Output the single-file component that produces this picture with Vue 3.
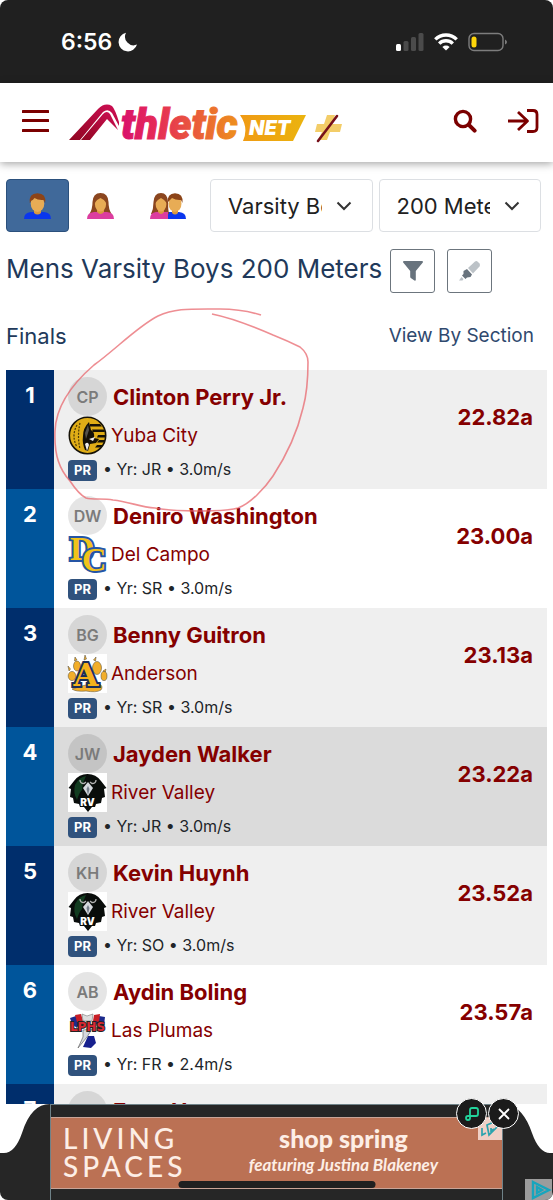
<template>
  <div class="page">
    <div class="status-bar">
      <div class="status-time">
        <span>6:56</span>
        <svg width="20" height="20" viewBox="0 0 20 20" aria-hidden="true">
          <path d="M8 .8A9.4 9.4 0 1 0 19 12.6 8.6 8.6 0 0 1 8 .8Z" fill="#fff" />
        </svg>
      </div>
      <div class="status-icons">
        <svg width="28" height="18" viewBox="0 0 28 18" aria-hidden="true">
          <rect x="0" y="11" width="5" height="7" rx="1.5" fill="#fff" />
          <rect x="7.5" y="8" width="5" height="10" rx="1.5" fill="#4b4b4b" />
          <rect x="15" y="4" width="5" height="14" rx="1.5" fill="#4b4b4b" />
          <rect x="22.5" y="0" width="5" height="18" rx="1.5" fill="#4b4b4b" />
        </svg>
        <svg width="24" height="18" viewBox="0 0 24 18" aria-hidden="true">
          <g fill="none" stroke="#fff" stroke-width="3.4">
            <path d="M1.3 6.4A15.2 15.2 0 0 1 22.7 6.4" />
            <path d="M5.2 10.6A9.7 9.7 0 0 1 18.8 10.6" />
          </g>
          <path d="M12 17.6 8.4 13.9A5.2 5.2 0 0 1 15.6 13.9Z" fill="#fff" />
        </svg>
        <svg width="40" height="20" viewBox="0 0 40 20" aria-hidden="true">
          <rect x="1" y="1.5" width="34" height="17" rx="5" fill="none" stroke="#7d7d7d" stroke-width="1.4" />
          <rect x="3.5" y="4.5" width="5" height="11" rx="2.5" fill="#ffd60a" />
          <path d="M37 7.5Q39 8.5 39 10T37 12.5Z" fill="#7d7d7d" />
        </svg>
      </div>
    </div>

    <header class="site-header">
      <button class="icon-btn menu-btn" type="button" aria-label="Menu">
        <svg width="27" height="24" viewBox="0 0 27 24">
          <g fill="#7b0000">
            <rect y="1" width="27" height="3" rx=".5" />
            <rect y="10" width="27" height="3" rx=".5" />
            <rect y="20" width="27" height="3" rx=".5" />
          </g>
        </svg>
      </button>
      <a class="brand" href="#" aria-label="Athletic.net">
        <svg width="276" height="46" viewBox="0 0 276 46">
          <defs>
            <linearGradient id="markFill" x1="0" y1="1" x2="1" y2="0">
              <stop offset="0" stop-color="#8f0620" />
              <stop offset="1" stop-color="#cf0f55" />
            </linearGradient>
            <linearGradient id="wordFill" gradientUnits="userSpaceOnUse" x1="50" y1="0" x2="172" y2="0">
              <stop offset="0" stop-color="#d80f6c" />
              <stop offset=".3" stop-color="#e52a58" />
              <stop offset=".65" stop-color="#ea5f38" />
              <stop offset="1" stop-color="#ee941b" />
            </linearGradient>
            <linearGradient id="netFill">
              <stop offset="0" stop-color="#f09a14" />
              <stop offset="1" stop-color="#ebb40e" />
            </linearGradient>
          </defs>
          <g fill="url(#markFill)">
            <path d="M0 38 29 7Q36 0 43 4 46 7 50 20L50 24 43 11Q39 6 34 10L11 38Z" />
            <path d="M12 38 34 12Q38 8 41 12L49 28 38 17 21 38Z" />
          </g>
          <text class="brand-word" x="52" y="37" fill="url(#wordFill)" stroke="url(#wordFill)">thletic</text>
          <path d="M171 13H237L224 39H174Q180 26 171 13Z" fill="url(#netFill)" />
          <text class="brand-net" x="180" y="33" fill="#fff">NET</text>
          <path d="M258 13H266L263 22H273L271 30H261L258 38H249L253 30H246L248 22H255Z" fill="#f3cd68" />
          <path d="M268 14 249 39" stroke="#76101a" stroke-width="2.6" stroke-linecap="round" />
        </svg>
      </a>
      <div class="header-actions">
        <button class="icon-btn" type="button" aria-label="Search">
          <svg width="24" height="24" viewBox="0 0 24 24" fill="none" stroke="#7b0000">
            <circle cx="10" cy="10" r="7.6" stroke-width="3.4" />
            <path d="m15.8 15.8 5.8 5.8" stroke-width="4" stroke-linecap="round" />
          </svg>
        </button>
        <button class="icon-btn" type="button" aria-label="Log in">
          <svg width="32" height="24" viewBox="0 0 32 24" fill="none" stroke="#7b0000" stroke-width="2.8" stroke-linejoin="round">
            <path d="M1 12H20M11 3l9.500 9-9.500 9" />
            <path d="M20 1.500H26Q30 1.500 30 5.500V18.500Q30 22.500 26 22.500H20" />
          </svg>
        </button>
      </div>
    </header>

    <main class="content">
      <div class="filters">
        <div class="genders">
          <button class="gender active" type="button" aria-label="Men">
            <svg width="27" height="27" viewBox="0 0 27 27">
              <path d="M0 27Q0 20.500 7 20H20Q27 20.500 27 27Z" fill="#0a36ee" />
              <path d="M10 17H17V21Q13.500 24 10 21Z" fill="#d9993f" />
              <ellipse cx="13.5" cy="11.5" rx="6.8" ry="8.5" fill="#e8ac55" />
              <path d="M5.800 11Q4.500 1.500 13.500 1.300 22.500 1.500 21.200 11L19.500 8Q14 8.500 10.500 6 8.500 8.500 7.500 8.500Z" fill="#8c4418" />
            </svg>
          </button>
          <button class="gender" type="button" aria-label="Women">
            <svg width="27" height="27" viewBox="0 0 27 27">
              <path d="M13.500 1Q6 1 5.500 10 5.500 17 2.500 22H24.500Q21.500 17 21.500 10 21 1 13.500 1Z" fill="#8b461f" />
              <path d="M0 27Q0 20.500 7 20H20Q27 20.500 27 27Z" fill="#dc3d9f" />
              <path d="M10 16H17V20Q13.500 24 10 20Z" fill="#d9993f" />
              <ellipse cx="13.5" cy="12" rx="5.6" ry="7.4" fill="#e8ac55" />
              <path d="M7.500 11Q9 8 13.500 6 18 8 19.500 11 20.500 3 13.500 3 6.500 3 7.500 11Z" fill="#8b461f" />
            </svg>
          </button>
          <button class="gender" type="button" aria-label="Men and women">
            <svg width="36" height="27" viewBox="0 0 36 27">
              <path d="M18 27V20H29Q36 20.500 36 27Z" fill="#0a36ee" />
              <path d="M22 17H28V21Q25 24 22 21Z" fill="#d9993f" />
              <ellipse cx="25" cy="11.5" rx="6.5" ry="8.5" fill="#e8ac55" />
              <path d="M17.500 11Q17 1.500 25 1.300 33.500 1.500 32.500 11L31 8Q26 8.500 22 6 19.500 8.500 18.500 9.500Z" fill="#8c4418" />
              <path d="M11 1Q4 1 3.500 10 3.500 17 1 22H19Q18 17 18 10 17.500 1 11 1Z" fill="#8b461f" />
              <path d="M0 27Q0 20.500 6 20H18V27Z" fill="#dc3d9f" />
              <path d="M8 16H14V20Q11 24 8 20Z" fill="#d9993f" />
              <ellipse cx="11" cy="12" rx="5.4" ry="7.4" fill="#e8ac55" />
              <path d="M5.200 11Q7 8 11 6 15 8 16.800 11 18 3 11 3 4 3 5.200 11Z" fill="#8b461f" />
            </svg>
          </button>
        </div>
        <div class="select-wrap">
          <select v-model="division" aria-label="Division">
            <option>Varsity Boys</option>
          </select>
          <svg class="chevron" width="16" height="10" viewBox="0 0 16 10" aria-hidden="true">
            <path d="m1.500 1.500 6.500 6.500 6.500-6.500" />
          </svg>
        </div>
        <div class="select-wrap">
          <select v-model="event" aria-label="Event">
            <option>200 Meters</option>
          </select>
          <svg class="chevron" width="16" height="10" viewBox="0 0 16 10" aria-hidden="true">
            <path d="m1.500 1.500 6.500 6.500 6.500-6.500" />
          </svg>
        </div>
      </div>

      <div class="title-row">
        <h1>Mens Varsity Boys 200 Meters</h1>
        <div class="tools">
          <button class="tool-btn" type="button" aria-label="Filter">
            <svg width="20" height="20" viewBox="0 0 20 20">
              <path d="M.6 0H19.400Q20.400.8 19.600 1.800L12.800 10V19Q12.500 20 11.400 19.500L7.800 17Q7.200 16.500 7.200 15.500V10L.4 1.800Q-.4.8.6 0Z" fill="#68737d" />
            </svg>
          </button>
          <button class="tool-btn" type="button" aria-label="Highlight">
            <svg width="22" height="22" viewBox="0 0 22 22">
              <path d="M9 8 16 1.500Q17.500.5 19 2L20.500 3.500Q21.500 5 20.500 6.500L14 13.500Z" fill="#bcc2c7" />
              <path d="M8 9 13 14.500 11.500 17 8 17.500 6.500 19 3 15.500 4.500 14V11Z" fill="#68737d" />
              <path d="M2.500 17 4.500 19 3.500 20.500H0Z" fill="#bcc2c7" />
            </svg>
          </button>
        </div>
      </div>

      <div class="section-row">
        <h2>Finals</h2>
        <a href="#">View By Section</a>
      </div>

      <table class="results">
        <tbody>
          <tr v-for="r in results" :key="r.place" :class="{ pressed: r.pressed }">
            <td class="place">{{ r.place }}</td>
            <td class="athlete">
              <div class="line">
                <span class="avatar">{{ r.initials }}</span>
                <a class="name" href="#">{{ r.name }}</a>
              </div>
              <div class="line">
                <!-- Yuba City -->
                <svg v-if="r.logo === 'yuba'" class="team-logo" viewBox="0 0 39 39">
                  <circle cx="19.5" cy="19.5" r="18.2" fill="#e0ad16" stroke="#161208" stroke-width="1.6" />
                  <path d="M22 8H32L34 10.500H22ZM24 13.500H36L37 16H25ZM30 19H37V21.500H29ZM31 24H37L36 26.500H29ZM29 29H35L33 31.500H27Z" fill="#161208" />
                  <path d="M21 6Q15 12 15 20 14 27 17 34L20 35 22 28 28 27 31 23 26 22Q27 16 23 14Z" fill="#161208" />
                  <path d="M20 9 17 17 18 23 21 14Z" fill="#55534c" />
                  <path d="M17 28Q20 25 21 29L19 35ZM21 23 27 21 25 25Z" fill="#eee" />
                  <path d="M9 9Q3 20 9 31M12 7Q9 20 12 33" fill="none" stroke="#4d3a07" stroke-width="1.2" stroke-dasharray="2 1.3" />
                </svg>
                <!-- Del Campo -->
                <svg v-else-if="r.logo === 'campo'" class="team-logo" viewBox="0 0 39 39">
                  <text class="campo-letter" x="2" y="25">D</text>
                  <text class="campo-letter" x="14" y="36">C</text>
                </svg>
                <!-- Anderson -->
                <svg v-else-if="r.logo === 'anderson'" class="team-logo" viewBox="0 0 39 39">
                  <rect width="39" height="39" fill="#fff" />
                  <g fill="#f2ae2a" stroke="#4c4636" stroke-width=".5">
                    <ellipse cx="4" cy="22" rx="3.8" ry="4.6" />
                    <ellipse cx="9" cy="12" rx="3.5" ry="5" />
                    <ellipse cx="29" cy="14" rx="4.5" ry="6.5" />
                    <ellipse cx="36" cy="22" rx="3" ry="4.6" />
                    <path d="M4 35Q14 31 30 29 36 32 33 36 28 39 18 37 8 38 4 35Z" />
                    <path d="M17 1 18.500 5 16 6ZM7 3 9 6 6.500 7ZM28 3 27.500 7 25.500 6ZM38 15 37.500 18 35 17ZM0 12 2.500 15 1 17Z" />
                  </g>
                  <text class="anderson-letter" x="18" y="32" text-anchor="middle">A</text>
                </svg>
                <!-- River Valley -->
                <svg v-else-if="r.logo === 'river'" class="team-logo" viewBox="0 0 39 39">
                  <rect width="39" height="39" fill="#fff" />
                  <path d="M19.500 1Q28 1 33 8L38.500 15 36 16 37 24 34 25 33 30 28 31 27 34 24 34 20 39 16 34 12 34 11 31 6 30 5 25 2 24 3 16 .5 15 6 8Q11 1 19.500 1Z" fill="#090d0b" />
                  <path d="M7 12Q11 4 18 3L15 10 14 17Q11 20 9 27 5 20 7 12Z" fill="#123c20" />
                  <path d="M12 7Q12 10.500 16 10.500L18 9M22 9 24 10.500Q28 10.500 28 7" fill="none" stroke="#b4b4b4" stroke-width="1.3" />
                  <path d="M20 9 25 15 20 23 15 15Z" fill="#d5d9de" />
                  <path d="M20 13 21.500 16 20 22 18.500 16Z" fill="#77808c" />
                  <text class="river-letters" x="19.500" y="33" text-anchor="middle">RV</text>
                </svg>
                <!-- Las Plumas -->
                <svg v-else-if="r.logo === 'plumas'" class="team-logo" viewBox="0 0 39 39">
                  <path d="M2 7 8 5 12 11 9 17 4 13ZM37 6 31 5 27 11 31 17 36 14Z" fill="#1c2a8c" />
                  <path d="M7 4 13 3 15 10 9 11ZM32 3 26 4 25 10 31 11Z" fill="#c81e26" />
                  <path d="M14 3 19 5 25 3 24 10H15Z" fill="#ddd" stroke="#777" stroke-width=".6" />
                  <path d="M20 25 26 25 28 32 23 37 15 36Z" fill="#17208e" />
                  <path d="M15 19 24 18 19 26 10 37 15 26Z" fill="#d5d8df" stroke="#555" stroke-width=".6" />
                  <text class="plumas-letters" x="19.500" y="20" text-anchor="middle">LPHS</text>
                </svg>
                <a class="school" href="#">{{ r.school }}</a>
              </div>
              <div class="line meta">
                <span class="pr">PR</span>
                <span>• Yr: {{ r.year }} • {{ r.wind }}</span>
              </div>
            </td>
            <td class="mark"><a href="#">{{ r.mark }}</a></td>
          </tr>
        </tbody>
      </table>
    </main>

    <footer class="ad">
      <svg class="shoulder" width="50" height="96" viewBox="0 0 50 96" aria-hidden="true">
        <path d="M0 49H4Q15 49 22 29 31 0 50 0V96H0Z" fill="#262626" />
      </svg>
      <div class="ad-frame">
        <a class="ad-banner" href="#">
          <span class="ad-logo">LIVING<br>SPACES</span>
          <span class="ad-copy">
            <strong>shop spring</strong>
            <em>featuring Justina Blakeney</em>
          </span>
        </a>
        <svg class="ad-corner" width="24" height="22" viewBox="0 0 24 22" aria-hidden="true">
          <rect width="24" height="22" fill="#f0d0c6" />
          <path d="M4 10V17L8 15M9 7 11 17 20 8 16 4ZM13 10V13L16 11" fill="none" stroke="#2ca3ae" stroke-width="1.7" />
        </svg>
        <div class="ad-controls">
          <button type="button" aria-label="Ad provider">
            <svg width="14" height="14" viewBox="0 0 14 14" fill="none" stroke="#22d39b" stroke-width="1.8">
              <path d="M3 9H11Q13 9 13 7V3Q13 1 11 1H7Q5 1 5 3V11Q5 13 3 13T1 11 3 9Z" />
            </svg>
          </button>
          <button type="button" aria-label="Close ad">
            <svg width="12" height="12" viewBox="0 0 12 12" stroke="#fff" stroke-width="1.8">
              <path d="m1 1 10 10M11 1 1 11" />
            </svg>
          </button>
        </div>
      </div>
      <svg class="shoulder" width="50" height="96" viewBox="0 0 50 96" aria-hidden="true">
        <path d="M50 49H47Q36 49 29 29 19 0 0 0V96H50Z" fill="#262626" />
      </svg>
      <a class="ad-choices" href="#" aria-label="AdChoices">
        <svg width="27" height="21" viewBox="0 0 27 21">
          <rect width="27" height="21" fill="#9c9c9c" />
          <path d="M8 3 24 11 8 19ZM12 8V14L17 11Z" fill="none" stroke="#17a5bd" stroke-width="2.4" />
        </svg>
      </a>
      <div class="home-bar"></div>
    </footer>

    <!-- hand-drawn ring around the winner -->
    <svg class="scribble" width="553" height="540" viewBox="0 0 553 540" aria-hidden="true">
      <path d="M261 315C245 310 235 309 220 309 190 309 175 308 158 316 138 326 115 350 94 365 72 384 56 405 55 431 54 456 60 470 70 481 76 490 80 495 86 498 93 500 103 498 113 500 130 502 140 507 155 508 170 511 185 511 200 511 215 511 228 511 238 508 250 504 265 488 273 476 290 450 299 425 303 408 308 390 308 375 308 362 308 355 305 351 300 347 290 342 283 339 273 335 250 325 232 318 212 314" />
    </svg>
  </div>
</template>

<script setup>
import { ref } from 'vue'

const division = ref('Varsity Boys')
const event = ref('200 Meters')

const results = [
  { place: 1, initials: 'CP', name: 'Clinton Perry Jr.', school: 'Yuba City', logo: 'yuba', year: 'JR', wind: '3.0m/s', mark: '22.82a' },
  { place: 2, initials: 'DW', name: 'Deniro Washington', school: 'Del Campo', logo: 'campo', year: 'SR', wind: '3.0m/s', mark: '23.00a' },
  { place: 3, initials: 'BG', name: 'Benny Guitron', school: 'Anderson', logo: 'anderson', year: 'SR', wind: '3.0m/s', mark: '23.13a' },
  { place: 4, initials: 'JW', name: 'Jayden Walker', school: 'River Valley', logo: 'river', year: 'JR', wind: '3.0m/s', mark: '23.22a', pressed: true },
  { place: 5, initials: 'KH', name: 'Kevin Huynh', school: 'River Valley', logo: 'river', year: 'SO', wind: '3.0m/s', mark: '23.52a' },
  { place: 6, initials: 'AB', name: 'Aydin Boling', school: 'Las Plumas', logo: 'plumas', year: 'FR', wind: '2.4m/s', mark: '23.57a' },
  { place: 7, initials: '', name: 'Evan Hu', school: '', year: '', wind: '', mark: '' },
]
</script>

<style>
body {
  margin: 0;
  background: #fff;
}
</style>

<style scoped>
.page {
  position: relative;
  display: flex;
  flex-direction: column;
  height: 100vh;
  overflow: hidden;
  border-radius: 8px;
  background: #fff;
  color: #212529;
  font-family: Inter, "Liberation Sans", sans-serif;
  box-sizing: border-box;
}
.page *,
.page *::before {
  box-sizing: border-box;
}
a {
  text-decoration: none;
}
button {
  display: flex;
  align-items: center;
  justify-content: center;
  padding: 0;
  font: inherit;
  cursor: pointer;
}
svg {
  display: block;
  flex: none;
}

/* phone status bar */
.status-bar {
  flex: none;
  display: flex;
  align-items: center;
  justify-content: space-between;
  height: 83px;
  padding: 0 45px 0 61px;
  background: #202020;
}
.status-time {
  display: flex;
  align-items: center;
  gap: 6px;
  color: #fff;
  font-size: 23px;
  font-weight: 600;
}
.status-icons {
  display: flex;
  align-items: center;
  gap: 10px;
}

/* site header */
.site-header {
  position: relative;
  z-index: 1;
  flex: none;
  display: flex;
  align-items: center;
  height: 79px;
  padding: 0 14px 4px 22px;
  background: #fff;
  box-shadow: 0 2px 8px rgba(0, 0, 0, 0.35);
}
.icon-btn {
  border: 0;
  background: none;
}
.brand {
  margin-left: 20px;
  padding-top: 8px;
}
.brand-word {
  stroke-width: 1;
  font: italic 900 42px Roboto, sans-serif;
}
.brand-net {
  font: italic 900 20px Inter, sans-serif;
}
.header-actions {
  display: flex;
  gap: 30px;
  margin-left: auto;
}

/* filters */
.content {
  flex: 1;
  min-height: 0;
  overflow: hidden;
  padding: 17px 6px 0;
}
.filters {
  display: flex;
  gap: 6px;
  padding-right: 6px;
}
.genders {
  display: flex;
}
.gender {
  height: 53px;
  padding: 0 17px;
  border: 1px solid transparent;
  border-radius: 4px;
  background: none;
}
.gender.active {
  background: #40699a;
  border-color: #2b507c;
}
.select-wrap {
  position: relative;
  flex: 1;
  min-width: 0;
}
select {
  width: 100%;
  height: 53px;
  padding: 0 50px 0 17px;
  border: 1px solid #dcdfe3;
  border-radius: 4px;
  background: #fff;
  color: #212121;
  font-family: inherit;
  font-size: 22px;
  appearance: none;
}
.chevron {
  position: absolute;
  top: 22px;
  right: 21px;
  fill: none;
  stroke: #333;
  stroke-width: 2;
  pointer-events: none;
}

.title-row {
  display: flex;
  align-items: center;
  gap: 8px;
  margin-top: 17px;
}
.tools {
  display: flex;
  gap: 12px;
}
h1,
h2 {
  margin: 0;
  color: #21395a;
  font-weight: 400;
}
h1 {
  padding-bottom: 4px;
  font-size: 26px;
  line-height: 32px;
  white-space: nowrap;
}
.tool-btn {
  width: 45px;
  height: 44px;
  border: 1px solid #6c757d;
  border-radius: 3px;
  background: #fff;
}
.section-row {
  display: flex;
  align-items: center;
  justify-content: space-between;
  height: 77px;
  padding: 8px 13px 0 0;
}
h2 {
  font-size: 22px;
}
.section-row a {
  color: #2f496e;
  font-size: 19px;
}

/* results */
.results {
  width: 100%;
  border-collapse: collapse;
}
.results td {
  padding: 0;
  vertical-align: top;
}
.results tr:nth-child(odd) {
  background: #efefef;
}
.results tr.pressed {
  background: #dbdbdb;
}
.results .place {
  width: 48px;
  padding-top: 10px;
  background: #00559b;
  color: #fff;
  font-size: 22px;
  font-weight: 700;
  line-height: 30px;
  text-align: center;
}
.results tr:nth-child(odd) .place {
  background: #002e6c;
}
.results .athlete {
  padding: 7px 0 7px 14px;
}
.line {
  display: flex;
  align-items: center;
  gap: 4px;
  height: 39px;
  white-space: nowrap;
}
.avatar {
  display: flex;
  align-items: center;
  justify-content: center;
  width: 39px;
  height: 39px;
  margin-right: 2px;
  border-radius: 50%;
  background: rgba(0, 0, 0, 0.1);
  color: #7b7b7b;
  font-size: 16px;
  font-weight: 600;
}
.name {
  color: #850000;
  font-size: 22px;
  font-weight: 700;
}
.team-logo {
  width: 39px;
  height: 39px;
  overflow: visible;
}
.school {
  color: #850000;
  font-size: 19px;
}
.line.meta {
  gap: 6px;
  height: 27px;
  font-size: 16px;
}
.pr {
  margin-top: 4px;
  padding: 0 6px;
  border-radius: 4px;
  background: #30527d;
  color: #fff;
  font-size: 13px;
  font-weight: 700;
  line-height: 21px;
}
.results .mark {
  padding: 32px 14px 0 0;
  text-align: right;
}
.mark a {
  color: #850000;
  font-size: 22px;
  font-weight: 700;
  line-height: 30px;
}

/* lettering in team logos */
.campo-letter {
  fill: #f2c31b;
  stroke: #2555a5;
  stroke-width: 4;
  paint-order: stroke;
  font: 700 34px "Liberation Serif", serif;
}
.anderson-letter {
  fill: #f6b21b;
  stroke: #1c2d58;
  stroke-width: 4;
  paint-order: stroke;
  font: 700 32px "DejaVu Serif", serif;
}
.river-letters {
  fill: #fff;
  font: 900 10px Inter, sans-serif;
}
.plumas-letters {
  fill: #d92832;
  stroke: #222;
  stroke-width: 2;
  paint-order: stroke;
  font: 700 12px "DejaVu Sans", sans-serif;
}

/* bottom ad */
.ad {
  position: relative;
  flex: none;
  display: flex;
  height: 96px;
}
.ad-frame {
  position: relative;
  flex: 1;
  padding: 12px 0 11px;
  border: 1px solid #6f8288;
  border-width: 1px 1px 0;
  background: #262626;
}
.ad-banner {
  display: flex;
  align-items: center;
  height: 72px;
  padding: 0 64px 0 12px;
  border: 1px solid #c9a497;
  border-width: 1px 0;
  background: #bb7154;
  color: #fdeee6;
  white-space: nowrap;
}
.ad-logo {
  padding-bottom: 2px;
  font-family: Lato, sans-serif;
  font-size: 28px;
  font-weight: 500;
  line-height: 28px;
  letter-spacing: 4px;
}
.ad-copy {
  display: flex;
  flex-direction: column;
  align-items: center;
  margin-left: auto;
  padding-bottom: 4px;
  font-family: Lato, sans-serif;
}
.ad-copy strong {
  font-size: 25px;
  font-weight: 900;
  line-height: 28px;
}
.ad-copy em {
  font-size: 17px;
  font-weight: 700;
  line-height: 26px;
}
.ad-corner {
  position: absolute;
  top: 13px;
  right: 0;
}
.ad-controls {
  position: absolute;
  top: -7px;
  right: -17px;
  display: flex;
  gap: 1px;
}
.ad-controls button {
  width: 31px;
  height: 31px;
  border: 1px solid #fff;
  border-radius: 50%;
  background: #1b1b1b;
}
.ad-choices {
  position: absolute;
  right: 1px;
  bottom: 0;
}
.home-bar {
  position: absolute;
  bottom: 12px;
  left: 50%;
  width: 197px;
  height: 7px;
  border-radius: 4px;
  background: #202020;
  transform: translateX(-50%);
}

.scribble {
  position: absolute;
  top: 0;
  left: 0;
  z-index: 2;
  fill: none;
  stroke: #e85f66;
  stroke-width: 1.6;
  opacity: 0.7;
  pointer-events: none;
}
</style>
